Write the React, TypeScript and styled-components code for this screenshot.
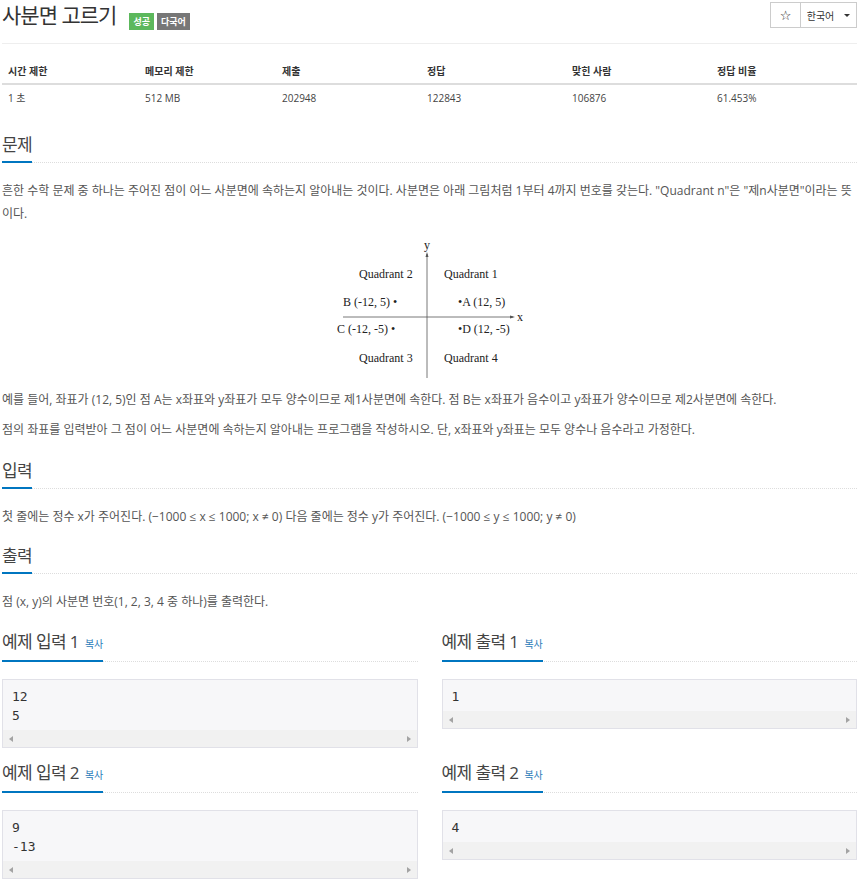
import React from 'react';
import styled, { createGlobalStyle } from 'styled-components';

const GlobalStyle = createGlobalStyle`
  html, body {
    margin: 0;
    padding: 0;
    background: #fff;
  }
  body {
    font-family: 'Open Sans', 'Noto Sans CJK KR', sans-serif;
    color: #555;
  }
`;

const Page = styled.div`
  padding: 0 6px 0 2px;
`;

const Header = styled.div`
  display: flex;
  justify-content: space-between;
  align-items: flex-start;
  height: 41px;
  padding-top: 2px;
  border-bottom: 1px solid #eee;
`;

const Title = styled.h1`
  margin: 0;
  display: flex;
  align-items: flex-end;
  gap: 3px;
  height: 26px;
  font-size: 21px;
  font-weight: 400;
  letter-spacing: -1px;
  color: #333;
`;

const TitleText = styled.span`
  line-height: 26px;
  margin-right: 10px;
`;

const Badge = styled.span<{ $bg: string }>`
  display: inline-block;
  background: ${(p) => p.$bg};
  color: #fff;
  font-size: 9px;
  font-weight: 700;
  letter-spacing: 0;
  line-height: 17px;
  padding: 0 4px;
  margin-bottom: -2px;
`;

const BtnGroup = styled.div`
  display: flex;
`;

const Btn = styled.button<{ $w: number }>`
  width: ${(p) => p.$w}px;
  height: 26px;
  background: #fff;
  border: 1px solid #ccc;
  margin-left: -1px;
  padding: 0;
  display: flex;
  align-items: center;
  justify-content: center;
  gap: 10px;
  font-family: 'Open Sans', 'Noto Sans CJK KR', sans-serif;
  font-size: 10px;
  color: #333;
`;

const Star = styled.span`
  font-family: 'DejaVu Sans', sans-serif;
  font-size: 13px;
  color: #222;
`;

const Caret = styled.span`
  width: 0;
  height: 0;
  border-left: 3px solid transparent;
  border-right: 3px solid transparent;
  border-top: 3px solid #333;
`;

const InfoTable = styled.table`
  width: 100%;
  margin: 14px 0 0;
  border-collapse: collapse;
  font-size: 10px;
`;

const Th = styled.th`
  text-align: left;
  padding: 4px 6px 3px;
  line-height: 18px;
  font-weight: 700;
  color: #333;
  border-bottom: 2px solid #ddd;
`;

const Td = styled.td`
  padding: 4px 6px;
  line-height: 18px;
  color: #444;
`;

const Section = styled.section<{ $top: number }>`
  margin-top: ${(p) => p.$top}px;
`;

const HeadlineRow = styled.div`
  border-bottom: 1px dotted #ddd;
  display: flex;
  align-items: flex-end;
`;

const Headline = styled.h2`
  margin: 0 0 -1px;
  padding-bottom: 4px;
  border-bottom: 2px solid #0076c0;
  font-size: 17px;
  line-height: 24px;
  font-weight: 400;
  letter-spacing: -0.6px;
  color: #444;
  display: flex;
  align-items: baseline;
  gap: 6px;
`;

const CopyLink = styled.a`
  font-size: 10px;
  letter-spacing: 0;
  color: #2a7ab8;
  text-decoration: none;
`;

const Body = styled.div`
  margin-top: 16px;
`;

const Para = styled.p`
  margin: 0 0 7px;
  font-size: 12px;
  line-height: 23px;
  color: #555;
`;

const Figure = styled.div`
  display: flex;
  justify-content: center;
  padding-top: 5px;
  margin-bottom: 8px;
`;

const SampleGrid = styled.div`
  display: grid;
  grid-template-columns: 1fr 1fr;
  column-gap: 24px;
  row-gap: 13px;
  margin-top: 17px;
`;

const SampleBox = styled.div`
  margin-top: 17px;
  border: 1px solid #e1e1e8;
  background: #f7f7f9;
`;

const SamplePre = styled.pre`
  margin: 0;
  padding: 7px 9px 5px;
  font-family: 'DejaVu Sans Mono', monospace;
  font-size: 13px;
  line-height: 19px;
  color: #333;
`;

const ScrollTrack = styled.div`
  height: 17px;
  background: #f1f1f1;
  display: flex;
  align-items: center;
  justify-content: space-between;
  padding: 0 6px;
`;

const Arrow = styled.span<{ $dir: 'left' | 'right' }>`
  width: 0;
  height: 0;
  border-top: 3px solid transparent;
  border-bottom: 3px solid transparent;
  ${(p) => (p.$dir === 'left' ? 'border-right: 4px solid #a3a3a3;' : 'border-left: 4px solid #a3a3a3;')}
`;

const infoHeads = ['시간 제한', '메모리 제한', '제출', '정답', '맞힌 사람', '정답 비율'];
const infoVals = ['1 초', '512 MB', '202948', '122843', '106876', '61.453%'];
const colWidths = [137, 137, 145, 145, 145, 146];

function QuadrantFigure() {
  const t = { fontFamily: "'Liberation Serif', 'Times New Roman', serif", fontSize: 12, fill: '#222' };
  return (
    <svg width="190" height="143" viewBox="0 0 190 143">
      <line x1="92" y1="17" x2="92" y2="141" stroke="#555" strokeWidth="0.8" />
      <path d="M90.5 20 L92 15 L93.5 20 Z" fill="#555" />
      <line x1="8" y1="80" x2="178" y2="80" stroke="#555" strokeWidth="0.8" />
      <path d="M175 78.5 L180 80 L175 81.5 Z" fill="#555" />
      <text x="89" y="12" {...t}>y</text>
      <text x="182" y="84" {...t}>x</text>
      <text x="24" y="41" {...t}>Quadrant 2</text>
      <text x="109" y="41" {...t}>Quadrant 1</text>
      <text x="8" y="69" {...t}>B (-12, 5) •</text>
      <text x="123" y="69" {...t}>•A (12, 5)</text>
      <text x="2" y="96" {...t}>C (-12, -5) •</text>
      <text x="123" y="96" {...t}>•D (12, -5)</text>
      <text x="24" y="125" {...t}>Quadrant 3</text>
      <text x="109" y="125" {...t}>Quadrant 4</text>
    </svg>
  );
}

function Sample({ title, text }: { title: string; text: string }) {
  return (
    <div>
      <HeadlineRow>
        <Headline>
          {title}
          <CopyLink href="#">복사</CopyLink>
        </Headline>
      </HeadlineRow>
      <SampleBox>
        <SamplePre>{text}</SamplePre>
        <ScrollTrack>
          <Arrow $dir="left" />
          <Arrow $dir="right" />
        </ScrollTrack>
      </SampleBox>
    </div>
  );
}

export default function App() {
  return (
    <>
      <GlobalStyle />
      <Page>
        <Header>
          <Title>
            <TitleText>사분면 고르기</TitleText>
            <Badge $bg="#5cb85c">성공</Badge>
            <Badge $bg="#777">다국어</Badge>
          </Title>
          <BtnGroup>
            <Btn $w={31}>
              <Star>☆</Star>
            </Btn>
            <Btn $w={57}>
              한국어
              <Caret />
            </Btn>
          </BtnGroup>
        </Header>

        <InfoTable>
          <colgroup>
            {colWidths.map((w, i) => (
              <col key={i} style={{ width: w }} />
            ))}
          </colgroup>
          <thead>
            <tr>
              {infoHeads.map((h) => (
                <Th key={h}>{h}</Th>
              ))}
            </tr>
          </thead>
          <tbody>
            <tr>
              {infoVals.map((v) => (
                <Td key={v}>{v}</Td>
              ))}
            </tr>
          </tbody>
        </InfoTable>

        <Section $top={22}>
          <HeadlineRow>
            <Headline>문제</Headline>
          </HeadlineRow>
          <Body>
            <Para>
              흔한 수학 문제 중 하나는 주어진 점이 어느 사분면에 속하는지 알아내는 것이다. 사분면은 아래 그림처럼 1부터 4까지 번호를 갖는다. "Quadrant n"은 "제n사분면"이라는 뜻이다.
            </Para>
            <Figure>
              <QuadrantFigure />
            </Figure>
            <Para>
              예를 들어, 좌표가 (12, 5)인 점 A는 x좌표와 y좌표가 모두 양수이므로 제1사분면에 속한다. 점 B는 x좌표가 음수이고 y좌표가 양수이므로 제2사분면에 속한다.
            </Para>
            <Para>점의 좌표를 입력받아 그 점이 어느 사분면에 속하는지 알아내는 프로그램을 작성하시오. 단, x좌표와 y좌표는 모두 양수나 음수라고 가정한다.</Para>
          </Body>
        </Section>

        <Section $top={18}>
          <HeadlineRow>
            <Headline>입력</Headline>
          </HeadlineRow>
          <Body>
            <Para>첫 줄에는 정수 x가 주어진다. (−1000 ≤ x ≤ 1000; x ≠ 0) 다음 줄에는 정수 y가 주어진다. (−1000 ≤ y ≤ 1000; y ≠ 0)</Para>
          </Body>
        </Section>

        <Section $top={16}>
          <HeadlineRow>
            <Headline>출력</Headline>
          </HeadlineRow>
          <Body>
            <Para>점 (x, y)의 사분면 번호(1, 2, 3, 4 중 하나)를 출력한다.</Para>
          </Body>
        </Section>

        <SampleGrid>
          <Sample title="예제 입력 1" text={'12\n5'} />
          <Sample title="예제 출력 1" text="1" />
          <Sample title="예제 입력 2" text={'9\n-13'} />
          <Sample title="예제 출력 2" text="4" />
        </SampleGrid>
      </Page>
    </>
  );
}
